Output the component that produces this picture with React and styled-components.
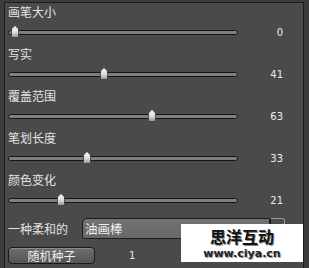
import styled, { createGlobalStyle } from "styled-components";

const GlobalStyle = createGlobalStyle`
    html, body {
        margin: 0;
        padding: 0;
        background: #3b3b3b;
        overflow: hidden;
    }
`;

const Frame = styled.div`
    position: relative;
    width: 309px;
    height: 268px;
    padding: 2px 0 0 4px;
    box-sizing: border-box;
    overflow: hidden;
    font-family: "Noto Sans CJK SC", "Noto Sans", sans-serif;
`;

const Panel = styled.div`
    width: 300px;
    height: 300px;
    box-sizing: border-box;
    border: 1px solid #1c1c1c;
    background: #4a4a4a;
    padding-left: 3px;
`;

const Row = styled.div`
    height: 42px;
    display: grid;
    grid-template-rows: 17px 25px;
`;

const Label = styled.div`
    font-size: 12px;
    line-height: 17px;
    color: #e4e4e4;
    white-space: nowrap;
`;

const SliderLine = styled.div`
    display: grid;
    grid-template-columns: 230px 45px;
    align-items: center;
`;

const TrackArea = styled.div`
    position: relative;
    height: 25px;
`;

const Track = styled.div`
    position: absolute;
    left: 0;
    right: 0;
    top: 10px;
    height: 5px;
    box-sizing: border-box;
    border: 1px solid #151515;
    border-radius: 3px;
    background: #7e7e7e;
`;

const Thumb = styled.svg`
    position: absolute;
    top: 5px;
`;

const Value = styled.div`
    text-align: right;
    font-family: "DejaVu Sans", sans-serif;
    font-size: 10px;
    line-height: 25px;
    color: #ececec;
`;

const ComboRow = styled.div`
    margin-top: 5px;
    height: 21px;
    display: flex;
    align-items: center;
`;

const ComboLabel = styled(Label)`
    width: 74px;
`;

const Combo = styled.div`
    width: 203px;
    height: 21px;
    display: flex;
    box-sizing: border-box;
`;

const ComboField = styled.div`
    flex: 1;
    box-sizing: border-box;
    border: 1px solid #1c1c1c;
    border-radius: 5px 0 0 2px;
    background: linear-gradient(#727272, #686868);
    color: #f0f0f0;
    font-size: 12.5px;
    line-height: 19px;
    padding-left: 2px;
`;

const ComboArrow = styled.div`
    width: 15px;
    box-sizing: border-box;
    border: 1px solid #9a9a9a;
    border-left-color: #1c1c1c;
    border-radius: 0 3px 3px 0;
    background: #4c4c4c;
`;

const ButtonRow = styled.div`
    margin-top: 8px;
    display: flex;
    align-items: center;
`;

const Button = styled.div`
    width: 87px;
    height: 17px;
    box-sizing: border-box;
    border: 1px solid #1a1a1a;
    border-radius: 4px;
    background: linear-gradient(#6e6e6e, #545454);
    color: #f0f0f0;
    font-size: 12px;
    line-height: 15px;
    text-align: center;
    box-shadow: inset 0 1px 0 #8a8a8a;
`;

const Seed = styled.div`
    margin-left: 34px;
    font-family: "DejaVu Sans", sans-serif;
    font-size: 10px;
    color: #ececec;
`;

const Watermark = styled.div`
    position: absolute;
    left: 181px;
    top: 224px;
    width: 122px;
    height: 38px;
    background: #ffffff;
    display: flex;
    flex-direction: column;
    align-items: center;
    justify-content: center;
`;

const MarkTitle = styled.div`
    font-size: 16px;
    font-weight: 700;
    line-height: 16px;
    margin-bottom: 4px;
    color: #111;
    text-shadow: 1px 1px 0 #888;
`;

const MarkUrl = styled.div`
    font-family: "DejaVu Sans", sans-serif;
    font-size: 11px;
    font-weight: 700;
    line-height: 11px;
    color: #222;
    text-shadow: 1px 1px 0 #999;
`;

const sliders = [
    { label: "画笔大小", value: 0 },
    { label: "写实", value: 41 },
    { label: "覆盖范围", value: 63 },
    { label: "笔划长度", value: 33 },
    { label: "颜色变化", value: 21 },
];

function SliderThumb({ value }) {
    return (
        <Thumb
            width="8"
            height="13"
            viewBox="0 0 8 13"
            style={{ left: 3 + value * 2.17 }}
        >
            <defs>
                <linearGradient id="thumbFill" x1="0" y1="0" x2="0" y2="1">
                    <stop offset="0" stopColor="#ffffff" />
                    <stop offset="0.6" stopColor="#d8d8d8" />
                    <stop offset="1" stopColor="#8c8c8c" />
                </linearGradient>
            </defs>
            <path
                d="M4 0.5 L7.5 4 L7.5 11.5 Q7.5 12.5 6.5 12.5 L1.5 12.5 Q0.5 12.5 0.5 11.5 L0.5 4 Z"
                fill="url(#thumbFill)"
                stroke="#3a3a3a"
                strokeWidth="0.8"
            />
        </Thumb>
    );
}

export default function App() {
    return (
        <>
            <GlobalStyle />
            <Frame>
                <Panel>
                    {sliders.map((s) => (
                        <Row key={s.label}>
                            <Label>{s.label}</Label>
                            <SliderLine>
                                <TrackArea>
                                    <Track />
                                    <SliderThumb value={s.value} />
                                </TrackArea>
                                <Value>{s.value}</Value>
                            </SliderLine>
                        </Row>
                    ))}
                    <ComboRow>
                        <ComboLabel>一种柔和的</ComboLabel>
                        <Combo>
                            <ComboField>油画棒</ComboField>
                            <ComboArrow />
                        </Combo>
                    </ComboRow>
                    <ButtonRow>
                        <Button>随机种子</Button>
                        <Seed>1</Seed>
                    </ButtonRow>
                </Panel>
                <Watermark>
                    <MarkTitle>思洋互动</MarkTitle>
                    <MarkUrl>www.ciya.cn</MarkUrl>
                </Watermark>
            </Frame>
        </>
    );
}
